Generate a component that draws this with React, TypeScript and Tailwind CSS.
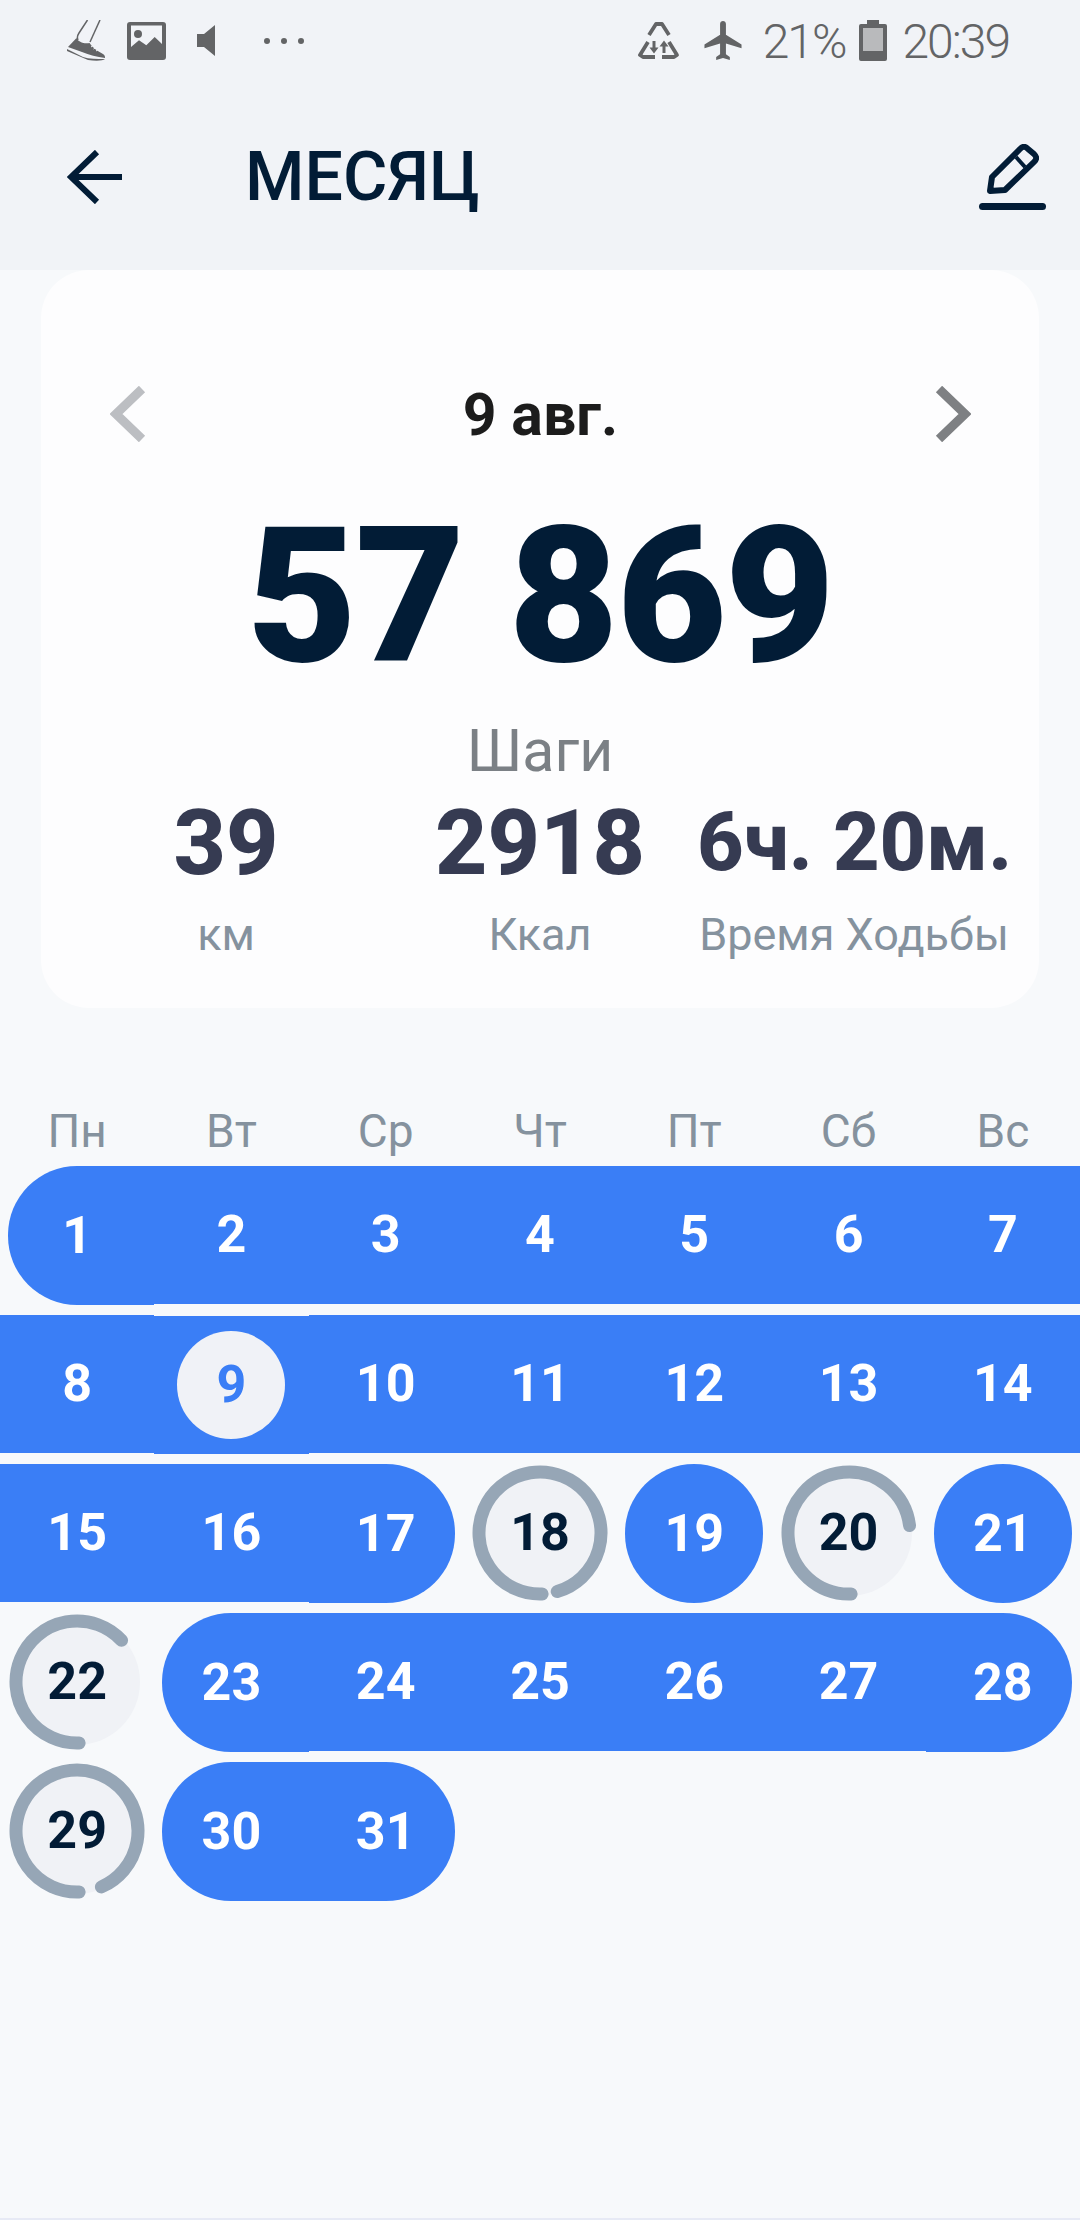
import React from 'react'

const navy = '#021c36'

type Day = { day: number; ring?: number; selected?: boolean; start?: boolean; end?: boolean }

const weeks: (Day | null)[][] = [
  [{ day: 1, start: true }, { day: 2 }, { day: 3 }, { day: 4 }, { day: 5 }, { day: 6 }, { day: 7 }],
  [{ day: 8 }, { day: 9, selected: true }, { day: 10 }, { day: 11 }, { day: 12 }, { day: 13 }, { day: 14 }],
  [{ day: 15 }, { day: 16 }, { day: 17, end: true }, { day: 18, ring: 96 }, { day: 19, start: true, end: true }, { day: 20, ring: 73.6 }, { day: 21, start: true, end: true }],
  [{ day: 22, ring: 63.6 }, { day: 23, start: true }, { day: 24 }, { day: 25 }, { day: 26 }, { day: 27 }, { day: 28, end: true }],
  [{ day: 29, ring: 94 }, { day: 30, start: true }, { day: 31, end: true }, null, null, null, null],
]

const dayNames = ['Пн', 'Вт', 'Ср', 'Чт', 'Пт', 'Сб', 'Вс']

function Ring({ percent }: { percent: number }) {
  const r = 61
  const from = (178 * Math.PI) / 180
  const to = from + (percent / 100) * 2 * Math.PI
  const x1 = 69 + r * Math.sin(from)
  const y1 = 69 - r * Math.cos(from)
  const x2 = 69 + r * Math.sin(to)
  const y2 = 69 - r * Math.cos(to)
  const large = percent > 50 ? 1 : 0
  return (
    <svg width="138" height="138" viewBox="0 0 138 138" className="col-start-1 row-start-1">
      <circle cx="69" cy="69" r="63" fill="#f0f2f6" />
      <path d={`M${x1} ${y1}A${r} ${r} 0 ${large} 1 ${x2} ${y2}`} fill="none" stroke="#96a6b6" strokeWidth="13" strokeLinecap="round" />
    </svg>
  )
}

function DayCell({ item }: { item: Day | null }) {
  if (!item) return <div />
  if (item.ring) {
    return (
      <div className="grid place-items-center h-[138px]">
        <Ring percent={item.ring} />
        <span className="col-start-1 row-start-1 text-[52px] font-bold text-[#021c36]">{item.day}</span>
      </div>
    )
  }
  const capped = item.start || item.end
  return (
    <div
      className={`flex items-center justify-center bg-[#3a7ef6] ${capped ? 'h-[139px]' : 'h-[138px]'} ${item.selected ? 'mt-[1px]' : ''} ${item.start ? 'ml-[8px] rounded-l-[69px]' : ''} ${item.end ? 'mr-[8px] rounded-r-[69px]' : ''} ${item.start && !item.end ? 'pr-[8px]' : ''} ${item.end && !item.start ? 'pl-[8px]' : ''}`}
    >
      {item.selected ? (
        <span className="flex items-center justify-center w-[108px] h-[108px] rounded-full bg-[#f0f2f7] text-[52px] font-bold text-[#3a7ef6]">
          {item.day}
        </span>
      ) : (
        <span className="text-[52px] font-bold text-white">{item.day}</span>
      )}
    </div>
  )
}

function StatusBar() {
  return (
    <div className="flex items-center h-[80px] pt-[1px] text-[#636466]">
      <svg width="38" height="41" viewBox="0 0 38 41" className="ml-[67px]" fill="#636466">
        <path d="M20.5 0 L12 13 C10 16 10 18 11 20" fill="none" stroke="#636466" strokeWidth="1.5" />
        <path d="M33 0 L23 22" fill="none" stroke="#636466" strokeWidth="1.5" />
        <path d="M1 27 L9.5 18 C11 22 17 24 22.5 23 C25 27 30 31 36 34 C38 35 38 37 38 38 C30 37 22 35 15 32 Z" />
        <path d="M0 29 L16 37 C22 39 30 39 38 39 C36 41 28 41 21 40 L0 31 Z" />
        <path d="M24 27 L27 25 M26.5 29 L29.5 27 M29 31 L32 29" fill="none" stroke="#f1f3f7" strokeWidth="1" />
      </svg>
      <svg width="39" height="38" viewBox="0 0 39 38" className="ml-[22px]">
        <rect width="39" height="38" rx="3" fill="#636466" />
        <rect x="4" y="3.5" width="31" height="24" fill="#f1f3f7" />
        <circle cx="11" cy="12" r="4" fill="#636466" />
        <path d="M4 25 L12 18.3 L19.3 23.3 L27.7 15 L35 22 V30 H4 Z" fill="#636466" />
      </svg>
      <svg width="18" height="31" viewBox="0 0 18 31" className="ml-[31px]" fill="#636466">
        <path d="M0 9H7L18 0V31L7 22H0Z" />
      </svg>
      <div className="flex gap-[11px] ml-[49px]">
        <span className="w-[6px] h-[6px] rounded-full bg-[#636466]" />
        <span className="w-[6px] h-[6px] rounded-full bg-[#636466]" />
        <span className="w-[6px] h-[6px] rounded-full bg-[#636466]" />
      </div>
      <svg width="42" height="37" viewBox="0 0 42 37" className="ml-auto" fill="none" stroke="#636466" strokeWidth="3.8" strokeLinejoin="round">
        <path d="M11 13 L18 2 H24 L31 13" />
        <path d="M10 20 L2 33 L5 35 H17" />
        <path d="M31 20 L39 33 L36 35 H24" />
        <path d="M16 19 V29" strokeWidth="3" />
        <path d="M26 31 V21" strokeWidth="3" />
        <path d="M11.5 25.5 H20.5 L16 31.5 Z M21.5 24.5 H30.5 L26 18.5 Z" fill="#636466" stroke="none" />
      </svg>
      <svg width="42" height="39" viewBox="2 2 19 20" className="ml-[22px]" fill="#636466">
        <path d="M21 16v-2l-8-5V3.5c0-.83-.67-1.5-1.5-1.5S10 2.67 10 3.5V9l-8 5v2l8-2.5V19l-2 1.5V22l3.5-1 3.5 1v-1.5L13 19v-5.5l8 2.5z" />
      </svg>
      <span className="ml-[19px] mt-[2px] text-[48px] font-light tracking-[-2px] leading-none">21%</span>
      <svg width="28" height="41" viewBox="0 0 28 41" className="ml-[14px]">
        <path d="M8 0H20V4H26A2 2 0 0 1 28 6V39A2 2 0 0 1 26 41H2A2 2 0 0 1 0 39V6A2 2 0 0 1 2 4H8Z" fill="#636466" />
        <rect x="4" y="8" width="20" height="23" fill="#b9babc" />
      </svg>
      <span className="ml-[15px] mt-[2px] mr-[71px] text-[48px] font-light tracking-[-2px] leading-none">20:39</span>
    </div>
  )
}

function Header() {
  return (
    <div className="h-[270px] bg-[#f1f3f7]">
      <StatusBar />
      <div className="flex items-center h-[190px] pt-[4px]">
        <svg width="56" height="54" viewBox="0 0 56 54" className="ml-[67px]" fill="none" stroke={navy} strokeWidth="6">
          <path d="M55 27H4" />
          <path d="M30 2L4 27L30 52" />
        </svg>
        <h1 className="ml-[122px] text-[68px] leading-none font-medium text-[#021c36]">МЕСЯЦ</h1>
        <div className="ml-auto mr-[34px] flex flex-col items-center gap-[9px]">
          <svg width="52" height="50" viewBox="0 0 52 50" fill="none" stroke={navy} strokeWidth="6" strokeLinejoin="round">
            <path d="M3 47 L5 33 L33 5 C36 2 38 2 41 5 L47 10 C50 13 50 15 47 18 L18 46 Z" />
            <path d="M29 13 L38 23" strokeWidth="4" />
          </svg>
          <div className="w-[67px] h-[7px] rounded-full bg-[#021c36]" />
        </div>
      </div>
    </div>
  )
}

function SummaryCard() {
  const stats = [
    { value: '39', label: 'км', size: 'text-[91px]' },
    { value: '2918', label: 'Ккал', size: 'text-[91px]' },
    { value: '6ч. 20м.', label: 'Время Ходьбы', size: 'text-[81px]' },
  ]
  return (
    <div className="mx-[41px] h-[738px] rounded-[48px] bg-[#fdfdfe] pt-[114px]">
      <div className="flex items-center justify-between h-[60px] pl-[69px] pr-[68px]">
        <svg width="36" height="56" viewBox="0 0 36 56" fill="none" stroke="#bcbec2" strokeWidth="9">
          <path d="M32 3L6 28L32 53" strokeLinejoin="miter" />
        </svg>
        <span className="text-[59px] font-bold text-[#1c1c1c] leading-none">9 авг.</span>
        <svg width="36" height="56" viewBox="0 0 36 56" fill="none" stroke="#7e8083" strokeWidth="9">
          <path d="M4 3L30 28L4 53" strokeLinejoin="miter" />
        </svg>
      </div>
      <div className="mt-[52px] h-[200px] text-center text-[190px] tracking-[-2px] leading-[200px] font-black text-[#021c36]">57 869</div>
      <div className="mt-[20px] h-[70px] text-center text-[59px] leading-[70px] text-[#7b8085]">Шаги</div>
      <div className="mt-[7px] grid grid-cols-3 px-[28px]">
        {stats.map((s) => (
          <div key={s.label} className={`h-[100px] text-center leading-[100px] font-extrabold whitespace-nowrap text-[#363b52] ${s.size}`}>
            {s.value}
          </div>
        ))}
      </div>
      <div className="mt-[12px] grid grid-cols-3 px-[28px]">
        {stats.map((s) => (
          <div key={s.label} className="h-[60px] text-center text-[45px] leading-[60px] whitespace-nowrap text-[#85929e]">
            {s.label}
          </div>
        ))}
      </div>
    </div>
  )
}

export default function App() {
  return (
    <div className="flex flex-col w-[1080px] h-[2220px] overflow-hidden bg-[#f7f9fb] [font-family:Roboto,sans-serif]">
      <Header />
      <SummaryCard />
      <div className="grid grid-cols-7 mt-[93px]">
        {dayNames.map((name) => (
          <div key={name} className="h-[60px] text-center text-[46px] leading-[60px] text-[#85929e]">
            {name}
          </div>
        ))}
      </div>
      <div className="flex flex-col gap-[11px] mt-[5px]">
        {weeks.map((week, i) => (
          <div key={i} className="grid grid-cols-7 h-[138px]">
            {week.map((item, j) => (
              <DayCell key={j} item={item} />
            ))}
          </div>
        ))}
      </div>
      <div className="mt-auto h-[2px] bg-[#e7eaf5]" />
    </div>
  )
}
